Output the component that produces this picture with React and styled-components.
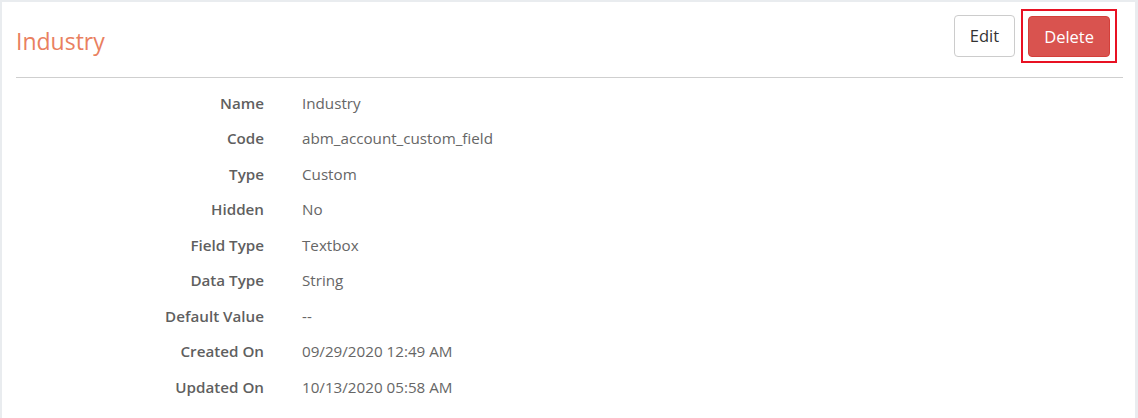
import React from "react";
import styled, { createGlobalStyle } from "styled-components";

const Global = createGlobalStyle`
  html, body { margin: 0; padding: 0; background: #e9ecef; }
  body { font-family: "Open Sans", "Noto Sans", sans-serif; }
  * { box-sizing: border-box; }
`;

const Page = styled.div`
  padding: 2px 3px 0 2px;
  height: 418px;
  overflow: hidden;
`;

const Panel = styled.div`
  background: #fff;
  height: 100%;
  padding: 0 12px 0 14px;
`;

const Header = styled.div`
  display: flex;
  justify-content: space-between;
  align-items: flex-start;
  height: 76px;
  border-bottom: 1px solid #cfcfcf;
  padding: 7px 6px 0 0;
`;

const Title = styled.h2`
  margin: 17px 0 0;
  font-size: 23px;
  font-weight: 400;
  line-height: 30px;
  color: #e9805f;
`;

const Actions = styled.div`
  display: flex;
  align-items: flex-start;
  gap: 6px;
`;

const Button = styled.button`
  font-family: inherit;
  font-size: 16.5px;
  line-height: 22px;
  border-radius: 4px;
  cursor: pointer;
  height: ${(p) => p.$h}px;
  padding: 0 ${(p) => p.$px}px;
  margin-top: ${(p) => p.$mt || 0}px;
  border: 1px solid ${(p) => (p.$danger ? "#d43f3a" : "#ccc")};
  background: ${(p) => (p.$danger ? "#d9534f" : "#fff")};
  color: ${(p) => (p.$danger ? "#fff" : "#333")};
`;

const Highlight = styled.div`
  border: 2px solid #e81123;
  padding: 5px 5px 4px 5px;
`;

const Details = styled.dl`
  margin: 7px 0 0;
  display: grid;
  grid-template-columns: 248px 1fr;
  grid-auto-rows: 35.5px;
  column-gap: 38px;
  align-items: center;
  font-size: 15.2px;
`;

const Label = styled.dt`
  text-align: right;
  font-weight: 600;
  color: #5f5f5f;
`;

const Value = styled.dd`
  margin: 0;
  color: #666;
`;

const rows = [
  ["Name", "Industry"],
  ["Code", "abm_account_custom_field"],
  ["Type", "Custom"],
  ["Hidden", "No"],
  ["Field Type", "Textbox"],
  ["Data Type", "String"],
  ["Default Value", "--"],
  ["Created On", "09/29/2020 12:49 AM"],
  ["Updated On", "10/13/2020 05:58 AM"],
];

export default function App() {
  return (
    <>
      <Global />
      <Page>
        <Panel>
          <Header>
            <Title>Industry</Title>
            <Actions>
              <Button $h={42} $px={15} $mt={6}>Edit</Button>
              <Highlight>
                <Button $danger $h={41} $px={15}>Delete</Button>
              </Highlight>
            </Actions>
          </Header>
          <Details>
            {rows.map(([k, v]) => (
              <React.Fragment key={k}>
                <Label>{k}</Label>
                <Value>{v}</Value>
              </React.Fragment>
            ))}
          </Details>
        </Panel>
      </Page>
    </>
  );
}
